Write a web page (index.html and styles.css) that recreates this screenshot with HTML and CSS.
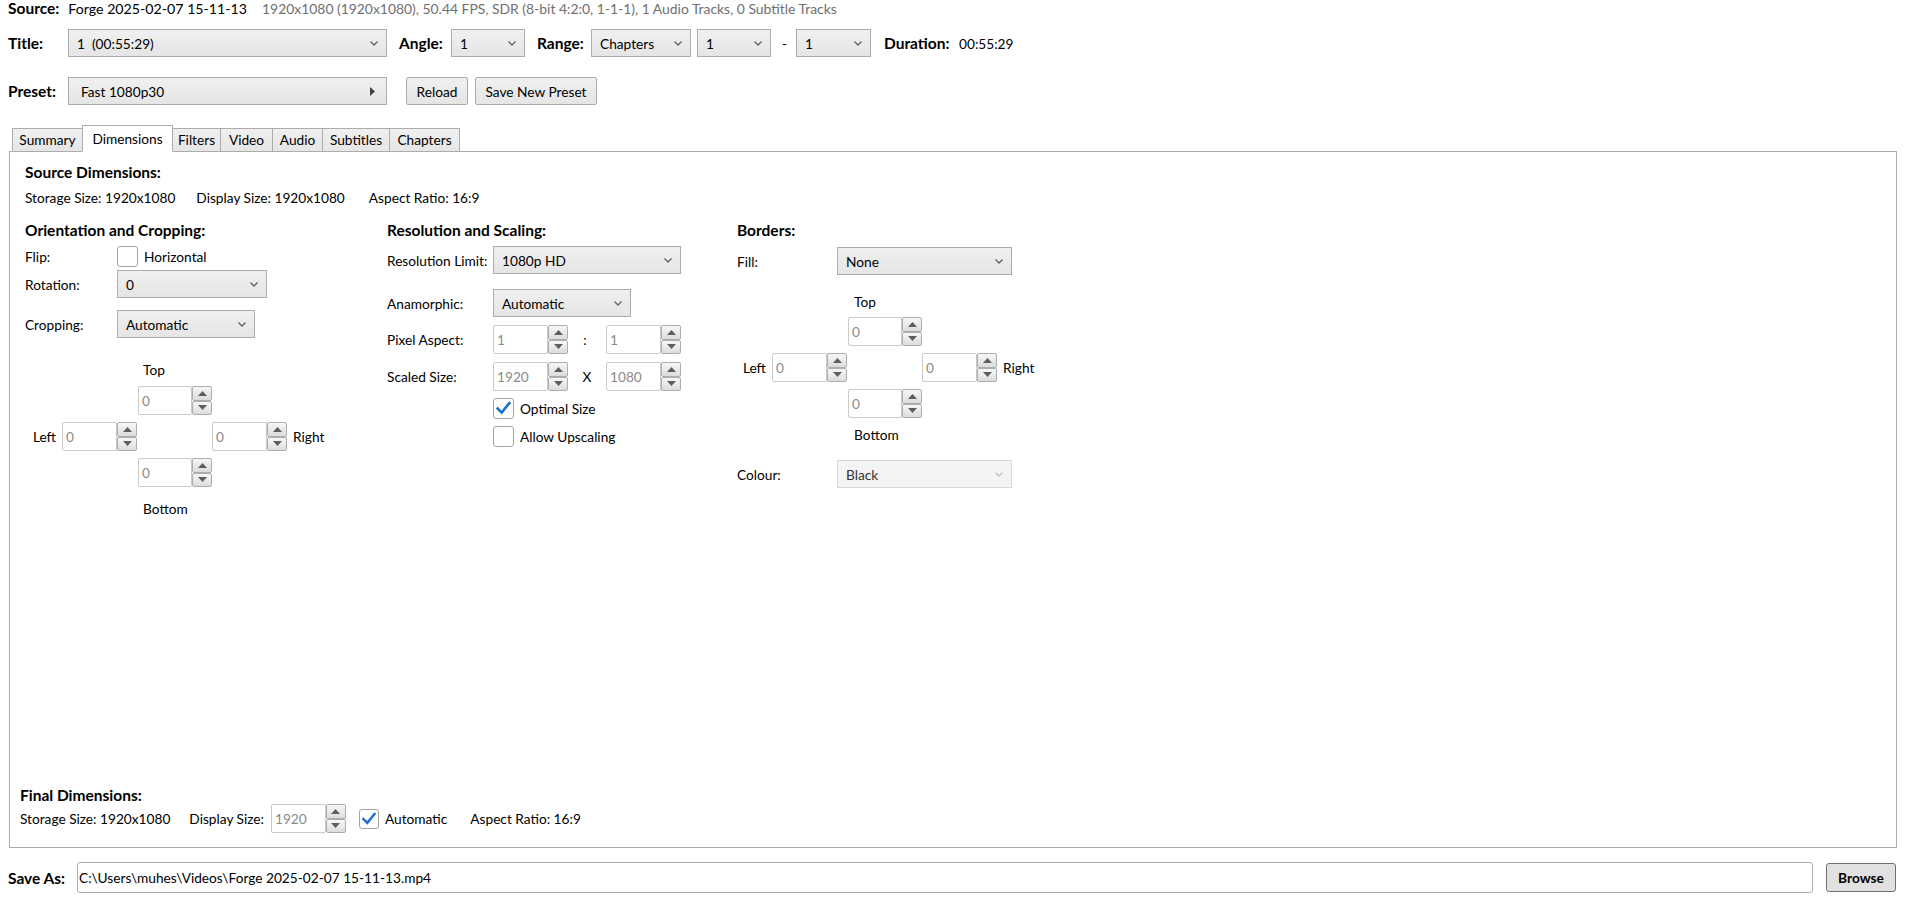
FILE: index.html
```html
<!DOCTYPE html>
<html>
<head>
<meta charset="utf-8">
<title>HandBrake - Dimensions</title>
<link rel="stylesheet" href="styles.css">
</head>
<body>
<div class="source-row">
  <span class="b">Source:</span>
  <span class="src-name">Forge 2025-02-07 15-11-13</span>
  <span class="src-info">1920x1080 (1920x1080), 50.44 FPS, SDR (8-bit 4:2:0, 1-1-1), 1 Audio Tracks, 0 Subtitle Tracks</span>
</div>

<div class="bar title-bar">
  <span class="b bar-label">Title:</span>
  <div class="combo w-title"><span>1  (00:55:29)</span><svg class="chev" viewBox="0 0 8 5" width="8" height="5"><path d="M0.5 0.5L4 4L7.5 0.5"/></svg></div>
  <span class="b lbl-angle">Angle:</span>
  <div class="combo w-74"><span>1</span><svg class="chev" viewBox="0 0 8 5" width="8" height="5"><path d="M0.5 0.5L4 4L7.5 0.5"/></svg></div>
  <span class="b lbl-range">Range:</span>
  <div class="combo w-range"><span>Chapters</span><svg class="chev" viewBox="0 0 8 5" width="8" height="5"><path d="M0.5 0.5L4 4L7.5 0.5"/></svg></div>
  <div class="combo w-74 ml-6"><span>1</span><svg class="chev" viewBox="0 0 8 5" width="8" height="5"><path d="M0.5 0.5L4 4L7.5 0.5"/></svg></div>
  <span class="dash">-</span>
  <div class="combo w-75"><span>1</span><svg class="chev" viewBox="0 0 8 5" width="8" height="5"><path d="M0.5 0.5L4 4L7.5 0.5"/></svg></div>
  <span class="b lbl-duration">Duration:</span>
  <span>00:55:29</span>
</div>

<div class="bar preset-bar">
  <span class="b bar-label">Preset:</span>
  <div class="combo preset-btn"><span>Fast 1080p30</span><svg class="arrow" viewBox="0 0 5 9" width="5" height="9"><path d="M0 0L5 4.5L0 9Z"/></svg></div>
  <div class="btn btn-reload">Reload</div>
  <div class="btn btn-save">Save New Preset</div>
</div>

<div class="tabs">
  <div class="tab t-summary">Summary</div>
  <div class="tab t-dimensions active">Dimensions</div>
  <div class="tab t-filters">Filters</div>
  <div class="tab t-video">Video</div>
  <div class="tab t-audio">Audio</div>
  <div class="tab t-subtitles">Subtitles</div>
  <div class="tab t-chapters">Chapters</div>
</div>

<div class="panel">
  <div class="sec">
    <div class="h">Source Dimensions:</div>
    <div class="dims-row">
      <span>Storage Size: 1920x1080</span>
      <span class="gap-21">Display Size: 1920x1080</span>
      <span class="gap-25">Aspect Ratio: 16:9</span>
    </div>
  </div>

  <div class="cols">
    <!-- Column 1 -->
    <div class="col col1">
      <div class="h">Orientation and Cropping:</div>
      <div class="frow r-flip">
        <span class="flab">Flip:</span>
        <div class="check"></div>
        <span class="check-lbl">Horizontal</span>
      </div>
      <div class="frow r-rotation">
        <span class="flab">Rotation:</span>
        <div class="combo w-150"><span>0</span><svg class="chev" viewBox="0 0 8 5" width="8" height="5"><path d="M0.5 0.5L4 4L7.5 0.5"/></svg></div>
      </div>
      <div class="frow r-cropping">
        <span class="flab">Cropping:</span>
        <div class="combo w-138"><span>Automatic</span><svg class="chev" viewBox="0 0 8 5" width="8" height="5"><path d="M0.5 0.5L4 4L7.5 0.5"/></svg></div>
      </div>
      <div class="pad pad-crop">
        <div class="ptop">Top</div>
        <div class="spin s-top"><div class="spin-box">0</div><div class="spin-btns"><div class="spin-btn"><svg viewBox="0 0 9 5" width="9" height="5"><path d="M0 5L4.5 0L9 5Z"/></svg></div><div class="spin-btn"><svg viewBox="0 0 9 5" width="9" height="5"><path d="M0 0L9 0L4.5 5Z"/></svg></div></div></div>
        <div class="s-left"><span class="side-lbl">Left</span><div class="spin"><div class="spin-box">0</div><div class="spin-btns"><div class="spin-btn"><svg viewBox="0 0 9 5" width="9" height="5"><path d="M0 5L4.5 0L9 5Z"/></svg></div><div class="spin-btn"><svg viewBox="0 0 9 5" width="9" height="5"><path d="M0 0L9 0L4.5 5Z"/></svg></div></div></div></div>
        <div class="s-right"><div class="spin"><div class="spin-box">0</div><div class="spin-btns"><div class="spin-btn"><svg viewBox="0 0 9 5" width="9" height="5"><path d="M0 5L4.5 0L9 5Z"/></svg></div><div class="spin-btn"><svg viewBox="0 0 9 5" width="9" height="5"><path d="M0 0L9 0L4.5 5Z"/></svg></div></div></div><span class="side-lbl-r">Right</span></div>
        <div class="spin s-bot"><div class="spin-box">0</div><div class="spin-btns"><div class="spin-btn"><svg viewBox="0 0 9 5" width="9" height="5"><path d="M0 5L4.5 0L9 5Z"/></svg></div><div class="spin-btn"><svg viewBox="0 0 9 5" width="9" height="5"><path d="M0 0L9 0L4.5 5Z"/></svg></div></div></div>
        <div class="pbot">Bottom</div>
      </div>
    </div>

    <!-- Column 2 -->
    <div class="col col2">
      <div class="h">Resolution and Scaling:</div>
      <div class="frow r-reslimit">
        <span class="flab">Resolution Limit:</span>
        <div class="combo w-188"><span>1080p HD</span><svg class="chev" viewBox="0 0 8 5" width="8" height="5"><path d="M0.5 0.5L4 4L7.5 0.5"/></svg></div>
      </div>
      <div class="frow r-anamorphic">
        <span class="flab">Anamorphic:</span>
        <div class="combo w-138"><span>Automatic</span><svg class="chev" viewBox="0 0 8 5" width="8" height="5"><path d="M0.5 0.5L4 4L7.5 0.5"/></svg></div>
      </div>
      <div class="frow r-pixel">
        <span class="flab">Pixel Aspect:</span>
        <div class="spin"><div class="spin-box">1</div><div class="spin-btns"><div class="spin-btn"><svg viewBox="0 0 9 5" width="9" height="5"><path d="M0 5L4.5 0L9 5Z"/></svg></div><div class="spin-btn"><svg viewBox="0 0 9 5" width="9" height="5"><path d="M0 0L9 0L4.5 5Z"/></svg></div></div></div>
        <span class="sep sep-colon">:</span>
        <div class="spin"><div class="spin-box">1</div><div class="spin-btns"><div class="spin-btn"><svg viewBox="0 0 9 5" width="9" height="5"><path d="M0 5L4.5 0L9 5Z"/></svg></div><div class="spin-btn"><svg viewBox="0 0 9 5" width="9" height="5"><path d="M0 0L9 0L4.5 5Z"/></svg></div></div></div>
      </div>
      <div class="frow r-scaled">
        <span class="flab">Scaled Size:</span>
        <div class="spin"><div class="spin-box">1920</div><div class="spin-btns"><div class="spin-btn"><svg viewBox="0 0 9 5" width="9" height="5"><path d="M0 5L4.5 0L9 5Z"/></svg></div><div class="spin-btn"><svg viewBox="0 0 9 5" width="9" height="5"><path d="M0 0L9 0L4.5 5Z"/></svg></div></div></div>
        <span class="sep">X</span>
        <div class="spin"><div class="spin-box">1080</div><div class="spin-btns"><div class="spin-btn"><svg viewBox="0 0 9 5" width="9" height="5"><path d="M0 5L4.5 0L9 5Z"/></svg></div><div class="spin-btn"><svg viewBox="0 0 9 5" width="9" height="5"><path d="M0 0L9 0L4.5 5Z"/></svg></div></div></div>
      </div>
      <div class="frow r-optimal">
        <div class="check"><svg viewBox="0 0 21 21" width="19" height="19"><path class="tick" d="M4 10.5L8.5 15L17 4.5"/></svg></div>
        <span class="check-lbl">Optimal Size</span>
      </div>
      <div class="frow r-upscale">
        <div class="check"></div>
        <span class="check-lbl">Allow Upscaling</span>
      </div>
    </div>

    <!-- Column 3 -->
    <div class="col col3">
      <div class="h">Borders:</div>
      <div class="frow r-fill">
        <span class="flab">Fill:</span>
        <div class="combo w-175"><span>None</span><svg class="chev" viewBox="0 0 8 5" width="8" height="5"><path d="M0.5 0.5L4 4L7.5 0.5"/></svg></div>
      </div>
      <div class="pad pad-border">
        <div class="ptop">Top</div>
        <div class="spin s-top"><div class="spin-box">0</div><div class="spin-btns"><div class="spin-btn"><svg viewBox="0 0 9 5" width="9" height="5"><path d="M0 5L4.5 0L9 5Z"/></svg></div><div class="spin-btn"><svg viewBox="0 0 9 5" width="9" height="5"><path d="M0 0L9 0L4.5 5Z"/></svg></div></div></div>
        <div class="s-left"><span class="side-lbl">Left</span><div class="spin"><div class="spin-box">0</div><div class="spin-btns"><div class="spin-btn"><svg viewBox="0 0 9 5" width="9" height="5"><path d="M0 5L4.5 0L9 5Z"/></svg></div><div class="spin-btn"><svg viewBox="0 0 9 5" width="9" height="5"><path d="M0 0L9 0L4.5 5Z"/></svg></div></div></div></div>
        <div class="s-right"><div class="spin"><div class="spin-box">0</div><div class="spin-btns"><div class="spin-btn"><svg viewBox="0 0 9 5" width="9" height="5"><path d="M0 5L4.5 0L9 5Z"/></svg></div><div class="spin-btn"><svg viewBox="0 0 9 5" width="9" height="5"><path d="M0 0L9 0L4.5 5Z"/></svg></div></div></div><span class="side-lbl-r">Right</span></div>
        <div class="spin s-bot"><div class="spin-box">0</div><div class="spin-btns"><div class="spin-btn"><svg viewBox="0 0 9 5" width="9" height="5"><path d="M0 5L4.5 0L9 5Z"/></svg></div><div class="spin-btn"><svg viewBox="0 0 9 5" width="9" height="5"><path d="M0 0L9 0L4.5 5Z"/></svg></div></div></div>
        <div class="pbot">Bottom</div>
      </div>
      <div class="frow r-colour">
        <span class="flab">Colour:</span>
        <div class="combo combo-disabled w-175"><span>Black</span><svg class="chev" viewBox="0 0 8 5" width="8" height="5"><path d="M0.5 0.5L4 4L7.5 0.5"/></svg></div>
      </div>
    </div>
  </div>

  <div class="final">
    <div class="h">Final Dimensions:</div>
    <div class="final-row">
      <span>Storage Size: 1920x1080</span>
      <span class="f-display">Display Size:</span>
      <div class="spin f-spin"><div class="spin-box">1920</div><div class="spin-btns"><div class="spin-btn"><svg viewBox="0 0 9 5" width="9" height="5"><path d="M0 5L4.5 0L9 5Z"/></svg></div><div class="spin-btn"><svg viewBox="0 0 9 5" width="9" height="5"><path d="M0 0L9 0L4.5 5Z"/></svg></div></div></div>
      <div class="check check-20 f-check"><svg viewBox="0 0 21 21" width="18" height="18"><path class="tick" d="M4 10.5L8.5 15L17 4.5"/></svg></div>
      <span class="check-lbl">Automatic</span>
      <span class="f-aspect">Aspect Ratio: 16:9</span>
    </div>
  </div>
</div>

<div class="save-row">
  <span class="b save-lbl">Save As:</span>
  <div class="save-box">C:\Users\muhes\Videos\Forge 2025-02-07 15-11-13.mp4</div>
  <div class="browse">Browse</div>
</div>
</body>
</html>
```

FILE: styles.css
```css
* { box-sizing: border-box; }
html, body { margin: 0; padding: 0; background: #ffffff; }
body {
  width: 1906px;
  height: 904px;
  overflow: hidden;
  font-family: Lato, "Open Sans", "Noto Sans", sans-serif;
  font-size: 13.7px;
  color: #000000;
  white-space: nowrap;
}
.b { font-weight: 700; font-size: 15.5px; }

/* Source line */
.source-row {
  display: flex;
  align-items: center;
  height: 17px;
  line-height: 17px;
  padding-left: 8px;
}
.src-name { margin-left: 9px; font-size: 14.2px; }
.src-info { margin-left: 15px; color: #6f6f6f; font-size: 13.9px; }

/* Toolbar rows */
.bar { display: flex; align-items: center; height: 28px; padding-left: 8px; }
.title-bar { margin-top: 12px; }
.preset-bar { margin-top: 20px; }
.bar-label { width: 60px; }

.combo {
  display: flex;
  align-items: center;
  justify-content: space-between;
  height: 28px;
  padding: 0 8px 0 8px;
  border: 1px solid #acacac;
  background: linear-gradient(#f0f0f0, #e5e5e5);
  white-space: pre;
  flex: none;
}
.chev { fill: none; stroke: #606060; stroke-width: 1.3; flex: none; }
.arrow { fill: #404040; flex: none; margin-right: 3px; }
.combo-disabled { background: #f4f4f4; border-color: #d9d9d9; color: #333333; }
.combo-disabled .chev { stroke: #c4c4c4; }

.w-title { width: 319px; }
.w-74 { width: 74px; }
.w-75 { width: 75px; }
.w-range { width: 100px; }
.w-150 { width: 150px; }
.w-138 { width: 138px; }
.w-188 { width: 188px; }
.w-175 { width: 175px; }
.ml-6 { margin-left: 6px; }

.lbl-angle { margin-left: 12px; width: 52px; }
.lbl-range { margin-left: 12px; width: 54px; }
.dash { width: 25px; text-align: center; padding-left: 2px; }
.lbl-duration { margin-left: 13px; width: 75px; }

.preset-btn { width: 319px; padding-left: 12px; }
.btn {
  height: 28px;
  display: flex;
  align-items: center;
  justify-content: center;
  border: 1px solid #acacac;
  border-radius: 2px;
  background: linear-gradient(#f0f0f0, #e5e5e5);
}
.btn-reload { margin-left: 19px; width: 62px; }
.btn-save { margin-left: 7px; width: 122px; }

/* Tabs */
.tabs {
  display: flex;
  align-items: flex-end;
  height: 27px;
  margin: 20px 0 0 12px;
  position: relative;
  z-index: 1;
}
.tab {
  height: 24px;
  display: flex;
  align-items: center;
  justify-content: center;
  border: 1px solid #acacac;
  margin-left: -1px;
  padding-bottom: 1px;
  background: linear-gradient(#f0f0f0, #e5e5e5);
}
.tab:first-child { margin-left: 0; }
.tab.active {
  height: 27px;
  background: #ffffff;
  border-bottom-color: #ffffff;
  padding-bottom: 0;
  position: relative;
}
.t-summary { width: 71px; }
.t-dimensions { width: 91px; }
.t-filters { width: 49px; }
.t-video { width: 53px; }
.t-audio { width: 51px; }
.t-subtitles { width: 68px; }
.t-chapters { width: 71px; }

/* Panel */
.panel {
  margin: -1px 9px 0 9px;
  height: 697px;
  border: 1px solid #acacac;
  display: flex;
  flex-direction: column;
  padding: 12px 0 14px 0;
}
.h {
  height: 18px;
  line-height: 18px;
  font-weight: 700;
  font-size: 15.5px;
}
.sec { padding-left: 15px; }
.sec .h { margin-top: -1px; }
.dims-row { display: flex; align-items: center; height: 18px; margin-top: 7px; }
.gap-21 { margin-left: 21px; }
.gap-25 { margin-left: 24px; }

.cols {
  display: grid;
  grid-template-columns: 362px 350px 1fr;
  align-items: start;
  margin-top: 15px;
  padding-left: 15px;
}
.frow { display: flex; align-items: center; }
.col1 .flab { width: 92px; }
.col2 .flab { width: 106px; }
.col3 .flab { width: 100px; }

.r-flip { margin-top: 7px; height: 21px; }
.r-rotation { margin-top: 3px; }
.r-cropping { margin-top: 12px; }

.r-reslimit { margin-top: 7px; }
.r-anamorphic { margin-top: 15px; }
.r-pixel { margin-top: 8px; }
.r-scaled { margin-top: 8px; }
.r-optimal { margin-top: 7px; padding-left: 106px; }
.r-upscale { margin-top: 7px; padding-left: 106px; }

.r-fill { margin-top: 8px; }
.r-colour { margin-top: 16px; }

.check {
  width: 21px;
  height: 21px;
  border: 1px solid #a3a3a3;
  border-radius: 3px;
  background: #ffffff;
  display: flex;
  align-items: center;
  justify-content: center;
  flex: none;
}
.check-20 { width: 20px; height: 20px; }
.tick { fill: none; stroke: #1c6dd0; stroke-width: 2.8; stroke-linecap: square; stroke-linejoin: miter; }
.check-lbl { margin-left: 6px; }

.sep { width: 38px; text-align: center; }
.sep-colon { padding-right: 4px; }

/* Spinners */
.spin { display: flex; height: 29px; flex: none; }
.spin-box {
  width: 55px;
  height: 29px;
  border: 1px solid #cacaca;
  border-radius: 2px;
  background: #ffffff;
  color: #8a8a8a;
  padding-left: 3px;
  display: flex;
  align-items: center;
}
.spin-btns { width: 20px; display: flex; flex-direction: column; }
.spin-btn {
  flex: 1;
  border: 1px solid #adadad;
  border-radius: 2px;
  background: linear-gradient(#f7f7f7, #dcdcdc);
  display: flex;
  align-items: center;
  justify-content: center;
}
.spin-btn svg { fill: #5e5e5e; }

/* Cross-shaped pads */
.pad { display: grid; align-items: center; }
.pad-crop { grid-template-columns: 113px 74px auto; margin-top: 23px; }
.pad-border { grid-template-columns: 111px 74px auto; margin-top: 18px; }
.ptop { grid-column: 2; grid-row: 1; height: 18px; line-height: 18px; padding-left: 5px; }
.pad-border .ptop, .pad-border .pbot { padding-left: 6px; }
.s-top { grid-column: 2; grid-row: 2; margin-top: 7px; }
.pad-border .s-top { margin-top: 6px; }
.s-left { grid-column: 1; grid-row: 3; justify-self: end; display: flex; align-items: center; margin-top: 7px; margin-right: 1px; }
.s-right { grid-column: 3; grid-row: 3; display: flex; align-items: center; margin-top: 7px; }
.s-bot { grid-column: 2; grid-row: 4; margin-top: 7px; }
.pbot { grid-column: 2; grid-row: 5; height: 18px; line-height: 18px; padding-left: 5px; margin-top: 13px; }
.pad-border .pbot { margin-top: 8px; }
.side-lbl { margin-right: 6px; }
.side-lbl-r { margin-left: 6px; }

/* Final dimensions */
.final { margin-top: auto; padding-left: 10px; }
.final-row { display: flex; align-items: center; height: 29px; }
.f-display { margin-left: 19px; }
.f-spin { margin-left: 7px; }
.f-check { margin-left: 13px; }
.f-aspect { margin-left: 23px; }

/* Save as */
.save-row {
  display: flex;
  align-items: center;
  height: 31px;
  margin-top: 14px;
  padding: 0 10px 0 8px;
}
.save-lbl { width: 69px; }
.save-box {
  flex: 1;
  height: 31px;
  border: 1px solid #abadb3;
  border-radius: 3px;
  padding-left: 1px;
  display: flex;
  align-items: center;
}
.browse {
  margin-left: 13px;
  width: 70px;
  height: 29px;
  border: 1px solid #707070;
  border-radius: 3px;
  background: #e1e1e1;
  font-weight: 700;
  display: flex;
  align-items: center;
  justify-content: center;
}
```
